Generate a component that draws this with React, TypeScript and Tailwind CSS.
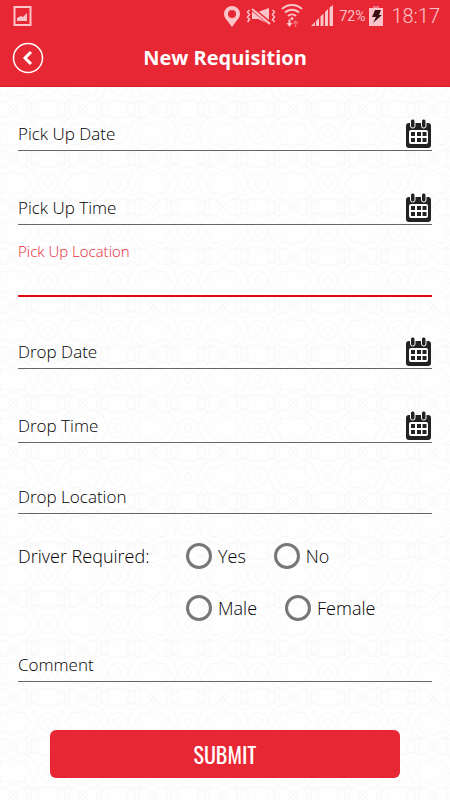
import { useState } from 'react';
import type { ReactNode } from 'react';

function StatusBar() {
  return (
    <div className="flex h-8 items-center justify-between pl-3 pr-[10px] text-[#fbc4c8]">
      <svg viewBox="0 0 20 20" className="h-5 w-5" fill="none">
        <rect x="2.5" y="1" width="16" height="18" stroke="currentColor" strokeWidth="2" />
        <path d="M5 15v-3l4-2 2 1 4-4v8z" fill="currentColor" />
      </svg>
      <div className="flex items-center">
        <svg viewBox="0 0 16 22" className="mr-[6px] h-[22px] w-4" fill="currentColor">
          <path fillRule="evenodd" d="M8 1a8 8 0 0 1 8 8c0 4-4 7-8 13C4 16 0 13 0 9a8 8 0 0 1 8-8zm0 4a4 4 0 1 0 0 8 4 4 0 0 0 0-8z" />
        </svg>
        <svg viewBox="0 0 30 20" className="mr-[5px] h-5 w-[30px]" fill="none" stroke="currentColor">
          <path d="M3.500 4l-2 2 2 2.500-2 2.500 2 2.500-2 2.500M26.500 4l2 2-2 2.500 2 2.500-2 2.500 2 2.500" strokeWidth="1.500" />
          <path d="M6 6h6l11-4v16l-11-5H6z" fill="currentColor" stroke="none" />
          <path d="M5 2l20 16" stroke="#e82734" strokeWidth="4" />
          <path d="M6 3l18 15" strokeWidth="2" />
        </svg>
        <svg viewBox="0 0 22 24" className="mr-2 h-6 w-[22px]" fill="none" stroke="currentColor" strokeWidth="2">
          <path d="M1 5a14.500 14.500 0 0 1 20 0M4 8.500a10 10 0 0 1 14 0M7 12a6 6 0 0 1 8 0" />
          <circle cx="11" cy="14.500" r="1.500" fill="currentColor" stroke="none" />
          <path d="M8.500 15.500V21" />
          <path d="M5.500 19h6l-3 4z" fill="currentColor" stroke="none" />
          <path d="M14.500 23v-5M12 19.500l2.500-2.500 2.500 2.500" opacity=".45" strokeWidth="1.500" />
        </svg>
        <svg viewBox="0 0 22 22" className="mr-[6px] h-[22px] w-[22px]" fill="currentColor">
          <path d="M0 21l4-4v4zM5 16l3-3v8H5zM9.500 11.500l3-3V21h-3zM14 7l3-3v17h-3zM18.500 2.500L22 0v21h-3.500z" />
        </svg>
        <span className="mr-1 font-['Roboto',sans-serif] text-sm">72%</span>
        <svg viewBox="0 0 14 20" className="mr-2 h-5 w-[14px]">
          <path d="M4 0h6v2H4z" fill="currentColor" opacity=".5" />
          <path d="M0 2h14v18H0z" fill="currentColor" />
          <path d="M6 4h6l-2 5h3l-9 8 3-6H3z" fill="#3a1014" />
        </svg>
        <span className="font-['Roboto',sans-serif] text-[20px] font-light leading-6">18:17</span>
      </div>
    </div>
  );
}

function CalendarIcon() {
  return (
    <svg viewBox="0 0 26 30" className="h-[30px] w-[26px]">
      <rect x="0" y="4" width="25" height="25" rx="3" fill="#222" />
      <rect x="3" y="11" width="19" height="14" rx="2" fill="#fff" />
      <path d="M5 13h4v4H5zM11 13h4v4h-4zM16.500 13h4v4h-4zM5 19h4v4H5zM11 19h4v4h-4zM16.500 19h4v4h-4z" fill="#222" />
      <rect x="4.500" y="0" width="4.500" height="9" rx="2" fill="#222" stroke="#fff" />
      <rect x="15.500" y="0" width="4.500" height="9" rx="2" fill="#222" stroke="#fff" />
    </svg>
  );
}

function Backdrop() {
  return (
    <svg aria-hidden="true" className="absolute inset-0 -z-10 h-full w-full" fill="none" stroke="#f7f7f7">
      <defs>
        <pattern id="rosettes" x="-22" y="11" width="70" height="49" patternUnits="userSpaceOnUse">
          <path d="M35 12l5 4 7-1 1 6 6 4-6 5-1 6-7-1-5 4-5-4-7 1-1-6-6-5 6-4 1-6 7 1z" />
          <path d="M20 0l3 8-8 5-5 11 5 12 8 5-3 8M50 0l-3 8 8 5 5 11-5 12-8 5 3 8" />
          <path d="M0 15l7 3 3 7-3 7-7 3M70 15l-7 3-3 7 3 7 7 3M0 20l4 5-4 5M70 20l-4 5 4 5" />
          <path d="M0 9h8l6-4 6 4 8-1 7-8 7 8 8 1 6-4 6 4h8M0 41h8l6 4 6-4 8 1 7 7 7-7 8-1 6 4 6-4h8" />
          <path d="M10 0v7h7V0M60 0v7h-7V0M10 49v-7h7v7M60 49v-7h-7v7M30 0l5 5 5-5M30 49l5-5 5 5" />
        </pattern>
      </defs>
      <rect width="100%" height="100%" fill="url(#rosettes)" stroke="none" />
    </svg>
  );
}

type FieldProps = { id: string; label: string; className: string; picker?: boolean };

function Field({ id, label, className, picker }: FieldProps) {
  return (
    <div className={`flex items-end border-b border-[#666] text-[17px] ${className}`}>
      <label htmlFor={id} className="shrink-0 pb-1 leading-6">{label}</label>
      <input id={id} className="min-w-0 flex-1 bg-transparent outline-none" />
      {picker && <button type="button" aria-label={`Choose ${label}`} className="pb-px"><CalendarIcon /></button>}
    </div>
  );
}

function Choice({ name, checked, onPick, children }: { name: string; checked: boolean; onPick: () => void; children: ReactNode }) {
  return (
    <label className="flex items-center gap-[6px]">
      <input
        type="radio"
        name={name}
        checked={checked}
        onChange={onPick}
        className="h-[26px] w-[26px] appearance-none rounded-full border-3 border-[#777] checked:bg-[#e82734]"
      />
      {children}
    </label>
  );
}

export default function App() {
  const [driver, setDriver] = useState('');
  const [gender, setGender] = useState('');

  return (
    <div className="relative isolate min-h-screen bg-[#fefefe] font-['Open_Sans',sans-serif] text-black">
      <Backdrop />
      <header className="border-b border-[#d91a27] bg-[#e82734]">
        <StatusBar />
        <div className="grid grid-cols-[32px_1fr_32px] items-center px-3 pb-3 pt-[10px]">
          <button type="button" aria-label="Back" className="flex h-8 w-8 items-center justify-center">
            <svg viewBox="0 0 32 32" className="h-8 w-8" fill="none" stroke="#fff">
              <circle cx="16" cy="16" r="14.500" strokeWidth="1.500" />
              <path d="M19 10l-6 6 6 6" strokeWidth="3" />
            </svg>
          </button>
          <h1 className="text-center text-[20px] font-bold leading-8 text-white">New Requisition</h1>
        </div>
      </header>

      <form className="px-[18px] pb-5 text-lg font-light" onSubmit={e => e.preventDefault()}>
        <Field id="pickup-date" label="Pick Up Date" className="mt-8" picker />
        <Field id="pickup-time" label="Pick Up Time" className="mt-[42px]" picker />

        <div className="mt-[14px] border-b-2 border-[#e30613]">
          <label htmlFor="pickup-location" className="block text-[15px] leading-6 text-[#e82734]">Pick Up Location</label>
          <input id="pickup-location" className="block h-8 w-full bg-transparent outline-none" />
        </div>

        <Field id="drop-date" label="Drop Date" className="mt-10" picker />
        <Field id="drop-time" label="Drop Time" className="mt-[42px]" picker />
        <Field id="drop-location" label="Drop Location" className="mt-[42px]" />

        <div className="mt-[29px] grid grid-cols-[168px_1fr] gap-y-[26px]">
          <span id="driver-label" className="leading-[26px]">Driver Required:</span>
          <div role="radiogroup" aria-labelledby="driver-label" className="flex h-[26px] gap-7">
            <Choice name="driver" checked={driver === 'yes'} onPick={() => setDriver('yes')}>Yes</Choice>
            <Choice name="driver" checked={driver === 'no'} onPick={() => setDriver('no')}>No</Choice>
          </div>
          <div role="radiogroup" aria-label="Driver gender" className="col-start-2 flex h-[26px] gap-7">
            <Choice name="gender" checked={gender === 'male'} onPick={() => setGender('male')}>Male</Choice>
            <Choice name="gender" checked={gender === 'female'} onPick={() => setGender('female')}>Female</Choice>
          </div>
        </div>

        <Field id="comment" label="Comment" className="mt-8" />

        <div className="mt-12 px-8">
          <button type="submit" className="h-12 w-full rounded-md bg-[#e82734] font-['Oswald','Open_Sans_Condensed','Roboto_Condensed',sans-serif] text-[22px] font-normal text-white">
            SUBMIT
          </button>
        </div>
      </form>
    </div>
  );
}
